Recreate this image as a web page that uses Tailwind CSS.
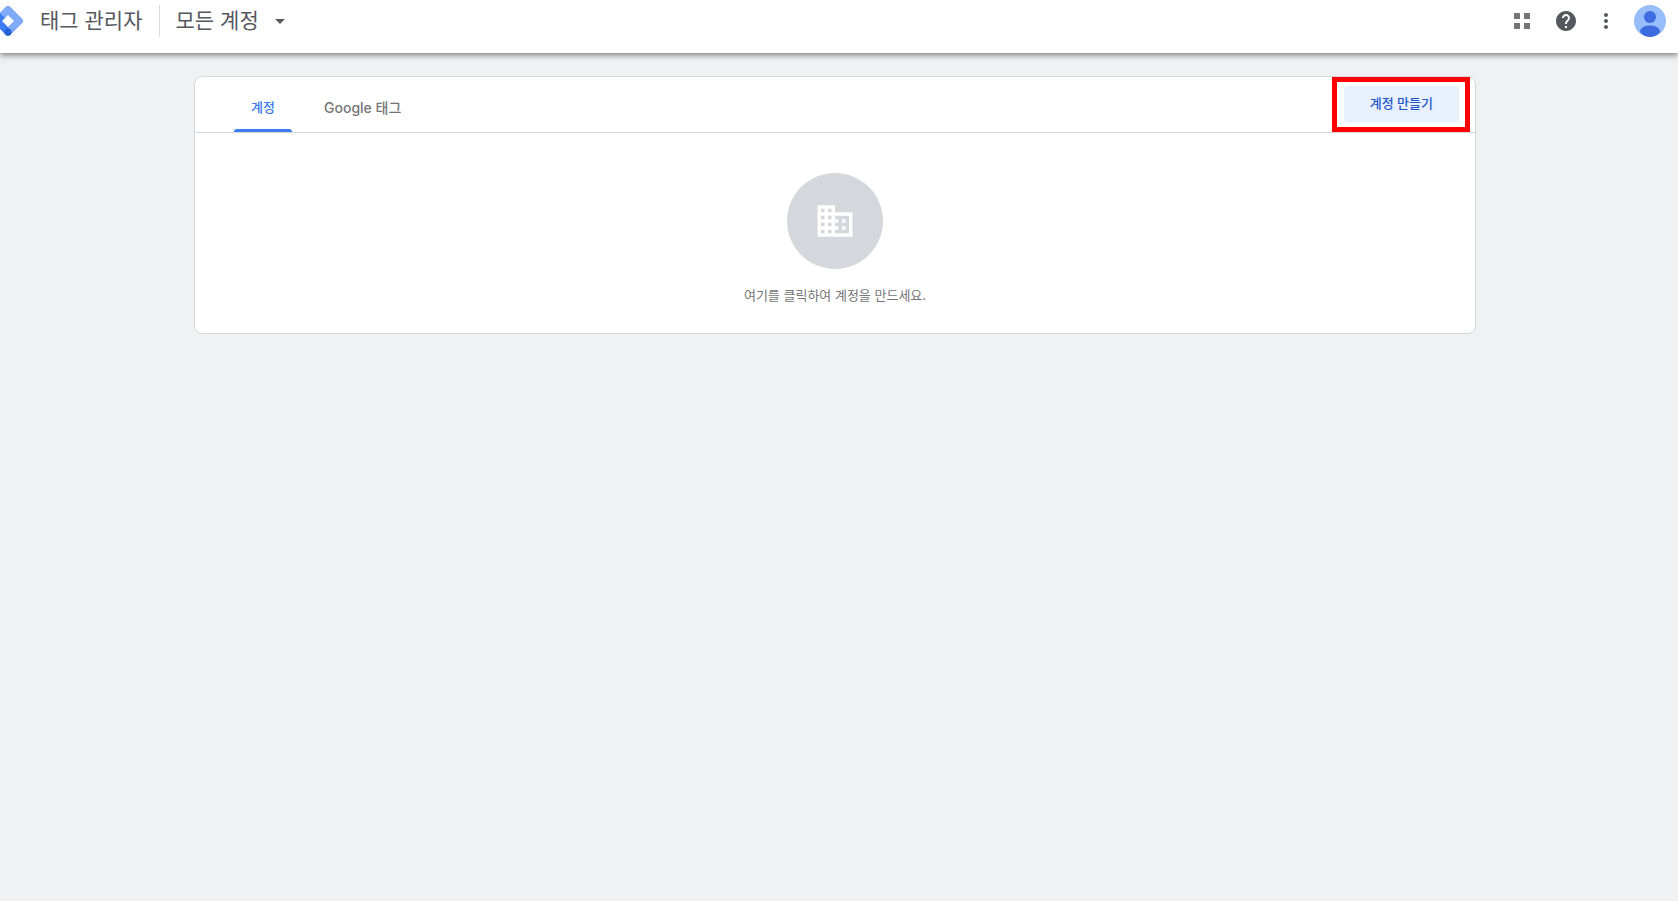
<!DOCTYPE html>
<html lang="ko">
<head>
    <meta charset="UTF-8">
    <meta name="viewport" content="width=device-width, initial-scale=1.0">
    <title>태그 관리자</title>

    <!-- Tailwind CSS -->
    <script src="https://cdn.jsdelivr.net/npm/@tailwindcss/browser@4"></script>
</head>
<body class="min-h-screen bg-[#eff1f3] font-[Inter,'Noto_Sans_CJK_KR',sans-serif] text-[13px] text-[#757575] overflow-x-hidden">

    <!-- Cabeçalho -->
    <header class="relative flex items-start justify-between bg-white pt-[5px] pb-4 pr-3 shadow-[0_2px_6px_rgba(0,0,0,0.5)]">
        <div class="flex items-center text-[#55585d]">
            <a href="#" class="flex items-center" aria-label="태그 관리자">
                <svg class="-ml-2 h-8 w-8" viewBox="0 0 32 32">
                    <path fill="#3c7df2" d="M14.200 1.800a2.600 2.600 0 0 1 3.600 0l12.400 12.400a2.600 2.600 0 0 1 0 3.600L17.800 30.200a2.600 2.600 0 0 1-3.600 0L1.800 17.800a2.600 2.600 0 0 1 0-3.600z"/>
                    <path fill="#80abf8" d="M8 8l6.200-6.200a2.600 2.600 0 0 1 3.600 0l12.400 12.400a2.600 2.600 0 0 1 0 3.600L19 29l-3-7 3-10-6 1z"/>
                    <path fill="#fff" d="M16 10l6 6-6 6-6-6z"/>
                    <circle cx="16" cy="27" r="3.600" fill="#2264d6"/>
                </svg>
                <span class="ml-4 text-[21px] leading-[30px]">태그 관리자</span>
            </a>
            <span class="mx-4 h-8 w-px bg-[#dadce0]"></span>
            <button class="flex items-center text-[21px] leading-[30px]">
                모든 계정
                <svg class="ml-4 h-[5px] w-[10px]" viewBox="0 0 10 5" fill="currentColor"><path d="M0 0h10L5 5z"/></svg>
            </button>
        </div>
        <div class="flex items-center">
            <button aria-label="앱"><svg class="h-4 w-4" viewBox="0 0 16 16" fill="#757575"><path d="M0 0h6v6H0zM10 0h6v6h-6zM0 10h6v6H0zM10 10h6v6h-6z"/></svg></button>
            <button class="ml-6" aria-label="도움말"><svg class="h-6 w-6" viewBox="0 0 24 24" fill="#55585d"><path d="M12 2C6.480 2 2 6.480 2 12s4.480 10 10 10 10-4.480 10-10S17.520 2 12 2zm1 17h-2v-2h2v2zm2.070-7.750-.900.920C13.450 12.900 13 13.500 13 15h-2v-.500c0-1.100.450-2.100 1.170-2.830l1.240-1.260c.370-.360.590-.860.590-1.410 0-1.100-.900-2-2-2s-2 .900-2 2H8c0-2.210 1.790-4 4-4s4 1.790 4 4c0 .880-.360 1.680-.930 2.250z"/></svg></button>
            <button class="ml-4" aria-label="더보기"><svg class="h-6 w-6" viewBox="0 0 24 24" fill="#55585d"><path d="M12 8c1.100 0 2-.900 2-2s-.900-2-2-2-2 .900-2 2 .900 2 2 2zm0 2c-1.100 0-2 .900-2 2s.900 2 2 2 2-.900 2-2-.900-2-2-2zm0 6c-1.100 0-2 .900-2 2s.900 2 2 2 2-.900 2-2-.900-2-2-2z"/></svg></button>
            <button class="ml-4" aria-label="프로필">
                <svg class="h-8 w-8 rounded-full bg-[#98bdfd]" viewBox="0 0 32 32" fill="#3d6be0"><circle cx="16" cy="12" r="6"/><path d="M6 27c0-4 4-6.500 10-6.500S26 23 26 27c-2.500 3.200-6 5-10 5s-7.500-1.800-10-5z"/></svg>
            </button>
        </div>
    </header>

    <!-- Lista de contas -->
    <main class="pt-[23px] pr-2">
        <section class="mx-auto w-[1282px] max-w-full rounded-lg border border-[#d5d7dc] bg-white">
            <div class="flex items-stretch justify-between border-b border-[#d5d7dc] pr-[5px] pl-[39px]">
                <nav class="flex font-medium">
                    <button class="flex flex-col items-center text-[#3b78e7]">
                        <span class="flex grow items-center px-4 pt-2.5">계정</span>
                        <span class="h-[3px] w-[58px] rounded-t-[3px] bg-[#3c7cf0]"></span>
                    </button>
                    <button class="ml-4 flex items-center px-4 pt-1.5 text-sm">Google 태그</button>
                </nav>
                <div class="border-5 border-[#ff0000] pt-1 pr-1.5 pb-[5px] pl-[7px]">
                    <button class="h-9 rounded bg-[#e8f0fc] px-[26px] font-medium text-[#1f59c8]">계정 만들기</button>
                </div>
            </div>
            <div class="flex flex-col items-center pt-10 pb-[26px]">
                <div class="flex h-24 w-24 items-center justify-center rounded-full bg-[#d5d7dc]">
                    <svg class="h-[42px] w-[42px]" viewBox="0 0 24 24" fill="#fff"><path d="M12 7V3H2v18h20V7H12zM6 19H4v-2h2v2zm0-4H4v-2h2v2zm0-4H4V9h2v2zm0-4H4V5h2v2zm4 12H8v-2h2v2zm0-4H8v-2h2v2zm0-4H8V9h2v2zm0-4H8V5h2v2zm10 12h-8v-2h2v-2h-2v-2h2v-2h-2V9h8v10zm-2-8h-2v2h2v-2zm0 4h-2v2h2v-2z"/></svg>
                </div>
                <p class="mt-3.5 leading-6">여기를 클릭하여 계정을 만드세요.</p>
            </div>
        </section>
    </main>

</body>
</html>
